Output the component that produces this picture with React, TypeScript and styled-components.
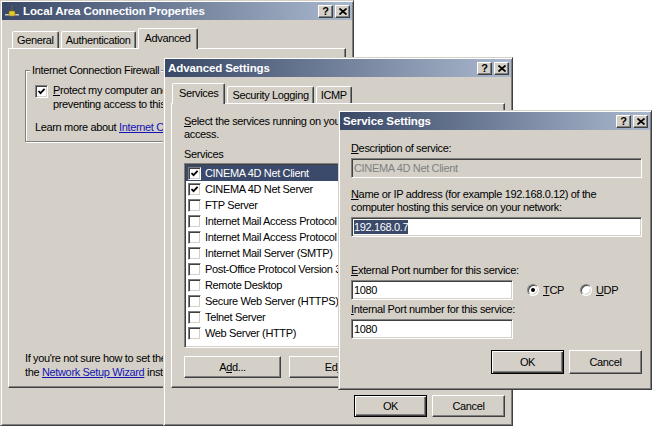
import React from 'react';
import styled, { createGlobalStyle } from 'styled-components';

const FACE = '#d4d0c8';
const SHADOW = '#808080';
const DARK = '#404040';
const LIGHT = '#ffffff';
const SELECT = '#3b4a6b';
const LINK = '#1414b4';

const GlobalStyle = createGlobalStyle`
  html, body { margin: 0; padding: 0; background: #fff; }
  body {
    font-family: "Liberation Sans", Arial, sans-serif;
    font-size: 11px;
    line-height: 13px;
    letter-spacing: -0.35px;
    color: #000;
  }
`;

const Desktop = styled.div`
  position: relative;
  width: 656px;
  height: 426px;
  overflow: hidden;
  background: #fff;
`;

const Window = styled.div<{ $x: number; $y: number; $w: number; $h: number }>`
  position: absolute;
  z-index: 0;
  left: ${(p) => p.$x}px;
  top: ${(p) => p.$y}px;
  width: ${(p) => p.$w}px;
  height: ${(p) => p.$h}px;
  box-sizing: border-box;
  padding: 1px;
  background: ${FACE};
  border: 1px solid;
  border-color: ${FACE} ${DARK} ${DARK} ${FACE};
  box-shadow: inset 1px 1px ${LIGHT}, inset -1px -1px ${SHADOW};
  display: flex;
  flex-direction: column;
`;

const TitleBar = styled.div`
  flex: none;
  height: 18px;
  display: flex;
  align-items: center;
  gap: 2px;
  padding: 0 2px;
  background: linear-gradient(to right, #394866, #aab8ce);
  color: #fff;
  font-size: 11.5px;
  font-weight: bold;
  letter-spacing: -0.1px;
`;

const TitleText = styled.span`
  flex: 1;
  padding-left: 1px;
  white-space: nowrap;
  overflow: hidden;
`;

const CaptionButton = styled.div`
  box-sizing: border-box;
  width: 15px;
  height: 13px;
  background: ${FACE};
  border: 1px solid;
  border-color: ${LIGHT} ${DARK} ${DARK} ${LIGHT};
  box-shadow: inset -1px -1px ${SHADOW};
  display: flex;
  align-items: center;
  justify-content: center;
  color: #000;
  font-size: 11px;
  font-weight: bold;
  line-height: 1;
  letter-spacing: 0;
`;

const WindowBody = styled.div<{ $top: number }>`
  flex: 1;
  min-height: 0;
  display: flex;
  flex-direction: column;
  padding: ${(p) => p.$top}px 6px 0;
`;

const DialogBody = styled.div`
  flex: 1;
  display: flex;
  flex-direction: column;
  padding: 12px 8px 0 11px;
`;

const TabStrip = styled.div<{ $indent: number }>`
  display: flex;
  align-items: flex-end;
  gap: 2px;
  height: 20px;
  padding-left: ${(p) => p.$indent}px;
  position: relative;
  z-index: 2;
`;

const Tab = styled.div<{ $active?: boolean }>`
  box-sizing: border-box;
  height: ${(p) => (p.$active ? 21 : 17)}px;
  margin-bottom: ${(p) => (p.$active ? -1 : 0)}px;
  padding: ${(p) => (p.$active ? '0 6px 2px' : '0 4px')};
  border: 1px solid;
  border-bottom: 0;
  border-color: ${LIGHT} ${DARK} transparent ${LIGHT};
  border-radius: 2px 2px 0 0;
  box-shadow: inset -1px 0 ${SHADOW};
  background: ${FACE};
  display: flex;
  align-items: center;
  white-space: nowrap;
`;

const TabPanel = styled.div<{ $h: number; $pad: string }>`
  box-sizing: border-box;
  height: ${(p) => p.$h}px;
  padding: ${(p) => p.$pad};
  border: 1px solid;
  border-color: ${LIGHT} ${DARK} ${DARK} ${LIGHT};
  box-shadow: inset -1px -1px ${SHADOW};
  display: flex;
  flex-direction: column;
  overflow: hidden;
  position: relative;
  z-index: 1;
`;

const GroupBox = styled.fieldset`
  margin: 0;
  padding: 6px 10px 7px 9px;
  border: 1px solid ${SHADOW};
  box-shadow: inset 1px 1px ${LIGHT}, 1px 1px ${LIGHT};
  min-width: 0;
`;

const Legend = styled.legend`
  margin-left: -5px;
  padding: 0 2px;
  line-height: 14px;
  white-space: nowrap;
  background: ${FACE};
`;

const CheckRow = styled.div`
  display: flex;
  gap: 5px;
  align-items: flex-start;
`;

const Lines = styled.div`
  line-height: 14px;
  white-space: nowrap;
`;

const Text = styled.div<{ $mt?: number }>`
  margin-top: ${(p) => p.$mt ?? 0}px;
  white-space: nowrap;
`;

const BottomNote = styled.div`
  margin-top: auto;
  line-height: 14px;
  white-space: nowrap;
`;

const Link = styled.span`
  color: ${LINK};
  text-decoration: underline;
`;

const Key = styled.span`
  text-decoration: underline;
`;

const Box = styled.span<{ $mt?: number }>`
  flex: none;
  box-sizing: border-box;
  width: 13px;
  height: 13px;
  margin-top: ${(p) => p.$mt ?? 0}px;
  background: #fff;
  border: 1px solid;
  border-color: ${SHADOW} ${LIGHT} ${LIGHT} ${SHADOW};
  box-shadow: inset 1px 1px ${DARK}, inset -1px -1px ${FACE};
  display: flex;
  align-items: center;
  justify-content: center;
`;

const CheckBox = ({ checked, mt }: { checked?: boolean; mt?: number }) => (
  <Box $mt={mt}>
    {checked && (
      <svg width="9" height="9" viewBox="0 0 9 9">
        <polyline points="1.5,4 3.5,6.2 7.6,1.8" fill="none" stroke="#000" strokeWidth="1.8" />
      </svg>
    )}
  </Box>
);

const ListBox = styled.div`
  box-sizing: border-box;
  height: 185px;
  margin-top: 2px;
  background: #fff;
  border: 1px solid;
  border-color: ${SHADOW} ${LIGHT} ${LIGHT} ${SHADOW};
  box-shadow: inset 1px 1px ${DARK}, inset -1px -1px ${FACE};
  padding: 1px 1px 0;
  overflow: hidden;
`;

const ListItem = styled.div<{ $selected?: boolean }>`
  height: 16px;
  display: flex;
  align-items: center;
  gap: 4px;
  padding-left: 2px;
  background: ${(p) => (p.$selected ? SELECT : 'transparent')};
  color: ${(p) => (p.$selected ? '#fff' : '#000')};
  white-space: nowrap;
`;

const ButtonRow = styled.div<{ $mt: number; $gap: number; $end?: boolean }>`
  display: flex;
  gap: ${(p) => p.$gap}px;
  margin-top: ${(p) => p.$mt}px;
  justify-content: ${(p) => (p.$end ? 'flex-end' : 'flex-start')};
`;

const Button = styled.div<{ $default?: boolean; $w: number; $h?: number }>`
  flex: none;
  box-sizing: border-box;
  width: ${(p) => p.$w}px;
  height: ${(p) => p.$h ?? 22}px;
  background: ${FACE};
  display: flex;
  align-items: center;
  justify-content: center;
  white-space: nowrap;
  border: 1px solid;
  border-color: ${(p) => (p.$default ? '#000' : `${LIGHT} ${DARK} ${DARK} ${LIGHT}`)};
  box-shadow: ${(p) =>
    p.$default
      ? `inset 1px 1px ${LIGHT}, inset -1px -1px ${DARK}, inset -2px -2px ${SHADOW}`
      : `inset -1px -1px ${SHADOW}`};
`;

const TextBox = styled.div<{ $disabled?: boolean; $w?: number; $mt?: number }>`
  flex: none;
  box-sizing: border-box;
  height: 20px;
  width: ${(p) => (p.$w ? `${p.$w}px` : 'auto')};
  margin-top: ${(p) => p.$mt ?? 0}px;
  padding: 0 2px;
  background: ${(p) => (p.$disabled ? FACE : '#fff')};
  color: ${(p) => (p.$disabled ? SHADOW : '#000')};
  border: 1px solid;
  border-color: ${SHADOW} ${LIGHT} ${LIGHT} ${SHADOW};
  box-shadow: inset 1px 1px ${DARK}, inset -1px -1px ${FACE};
  display: flex;
  align-items: center;
  white-space: nowrap;
`;

const Selection = styled.span`
  background: ${SELECT};
  color: #fff;
  line-height: 14px;
`;

const PortRow = styled.div`
  display: flex;
  align-items: center;
  gap: 14px;
  margin-top: 3px;
`;

const RadioGroup = styled.div`
  display: flex;
  gap: 16px;
`;

const RadioLabel = styled.div`
  display: flex;
  align-items: center;
  gap: 4px;
`;

const Radio = styled.span<{ $checked?: boolean }>`
  box-sizing: border-box;
  width: 12px;
  height: 12px;
  border-radius: 50%;
  background: #fff;
  border: 1px solid;
  border-color: ${SHADOW} ${LIGHT} ${LIGHT} ${SHADOW};
  box-shadow: inset 1px 1px ${DARK}, inset -1px -1px ${FACE};
  display: flex;
  align-items: center;
  justify-content: center;

  &::after {
    content: '';
    display: ${(p) => (p.$checked ? 'block' : 'none')};
    width: 4px;
    height: 4px;
    border-radius: 50%;
    background: #000;
  }
`;

const CaptionButtons = () => (
  <>
    <CaptionButton>?</CaptionButton>
    <CaptionButton>
      <svg width="8" height="7" viewBox="0 0 8 7">
        <path d="M0.5 0.5 L7.5 6.5 M7.5 0.5 L0.5 6.5" stroke="#000" strokeWidth="1.7" />
      </svg>
    </CaptionButton>
  </>
);

const NetIcon = () => (
  <svg width="16" height="16" viewBox="0 0 16 16" style={{ flex: 'none' }}>
    <rect x="1" y="11" width="14" height="1.5" fill="#c8c8c8" />
    <rect x="7" y="2" width="1.5" height="8" fill="#5a5a5a" />
    <rect x="5" y="8" width="6" height="5" rx="1" fill="#e8c830" stroke="#8a7010" strokeWidth="0.6" />
  </svg>
);

const services = [
  { name: 'CINEMA 4D Net Client', on: true },
  { name: 'CINEMA 4D Net Server', on: true },
  { name: 'FTP Server' },
  { name: 'Internet Mail Access Protocol Version 3 (IMAP3)' },
  { name: 'Internet Mail Access Protocol Version 4 (IMAP4)' },
  { name: 'Internet Mail Server (SMTP)' },
  { name: 'Post-Office Protocol Version 3 (POP3)' },
  { name: 'Remote Desktop' },
  { name: 'Secure Web Server (HTTPS)' },
  { name: 'Telnet Server' },
  { name: 'Web Server (HTTP)' },
];

export default function App() {
  return (
    <>
      <GlobalStyle />
      <Desktop>
        <Window $x={0} $y={0} $w={354} $h={426}>
          <TitleBar>
            <NetIcon />
            <TitleText>Local Area Connection Properties</TitleText>
            <CaptionButtons />
          </TitleBar>
          <WindowBody $top={8}>
            <TabStrip $indent={4}>
              <Tab>General</Tab>
              <Tab>Authentication</Tab>
              <Tab $active>Advanced</Tab>
            </TabStrip>
            <TabPanel $h={340} $pad="14px 16px 8px 16px">
              <GroupBox>
                <Legend>Internet Connection Firewall</Legend>
                <CheckRow>
                  <CheckBox checked mt={2} />
                  <Lines>
                    <div>
                      <Key>P</Key>rotect my computer and network by limiting or
                    </div>
                    <div>preventing access to this computer from the Internet</div>
                  </Lines>
                </CheckRow>
                <Text $mt={10}>
                  Learn more about <Link>Internet Connection Firewall</Link>.
                </Text>
              </GroupBox>
              <BottomNote>
                If you're not sure how to set these properties, use
                <br />
                the <Link>Network Setup Wizard</Link> instead.
              </BottomNote>
            </TabPanel>
          </WindowBody>
        </Window>

        <Window $x={163} $y={57} $w={350} $h={369}>
          <TitleBar>
            <TitleText>Advanced Settings</TitleText>
            <CaptionButtons />
          </TitleBar>
          <WindowBody $top={6}>
            <TabStrip $indent={1}>
              <Tab $active>Services</Tab>
              <Tab>Security Logging</Tab>
              <Tab>ICMP</Tab>
            </TabStrip>
            <TabPanel $h={285} $pad="11px 13px 0 12px">
              <Text>
                <Key>S</Key>elect the services running on your computer that Internet users can
                <br />
                access.
              </Text>
              <Text $mt={6} style={{ lineHeight: '14px' }}>
                Services
              </Text>
              <ListBox>
                {services.map((s, i) => (
                  <ListItem key={s.name} $selected={i === 0}>
                    <CheckBox checked={s.on} />
                    {s.name}
                  </ListItem>
                ))}
              </ListBox>
              <ButtonRow $mt={8} $gap={8}>
                <Button $w={97}>
                  A<Key>d</Key>d...
                </Button>
                <Button $w={97}>
                  Ed<Key>i</Key>t...
                </Button>
                <Button $w={97}>
                  De<Key>l</Key>ete
                </Button>
              </ButtonRow>
            </TabPanel>
            <ButtonRow $mt={7} $gap={5} $end>
              <Button $default $w={73}>
                OK
              </Button>
              <Button $w={73}>Cancel</Button>
            </ButtonRow>
          </WindowBody>
        </Window>

        <Window $x={338} $y={110} $w={314} $h={280}>
          <TitleBar>
            <TitleText>Service Settings</TitleText>
            <CaptionButtons />
          </TitleBar>
          <DialogBody>
            <Text>
              <Key>D</Key>escription of service:
            </Text>
            <TextBox $disabled $mt={3}>
              CINEMA 4D Net Client
            </TextBox>
            <Text $mt={10}>
              <Key>N</Key>ame or IP address (for example 192.168.0.12) of the
              <br />
              computer hosting this service on your network:
            </Text>
            <TextBox $mt={3}>
              <Selection>192.168.0.7</Selection>
            </TextBox>
            <Text $mt={27}>
              <Key>E</Key>xternal Port number for this service:
            </Text>
            <PortRow>
              <TextBox $w={162}>1080</TextBox>
              <RadioGroup>
                <RadioLabel>
                  <Radio $checked />
                  <span>
                    <Key>T</Key>CP
                  </span>
                </RadioLabel>
                <RadioLabel>
                  <Radio />
                  <span>
                    <Key>U</Key>DP
                  </span>
                </RadioLabel>
              </RadioGroup>
            </PortRow>
            <Text $mt={3}>
              <Key>I</Key>nternal Port number for this service:
            </Text>
            <TextBox $mt={3} $w={162}>
              1080
            </TextBox>
            <ButtonRow $mt={11} $gap={5} $end>
              <Button $default $w={73} $h={24}>
                OK
              </Button>
              <Button $w={73} $h={24}>
                Cancel
              </Button>
            </ButtonRow>
          </DialogBody>
        </Window>
      </Desktop>
    </>
  );
}
